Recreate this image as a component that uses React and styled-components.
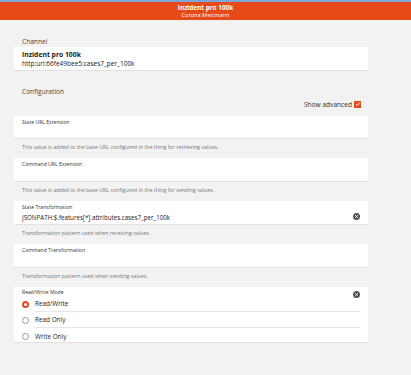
import React from 'react';
import styled, { createGlobalStyle } from 'styled-components';

const Global = createGlobalStyle`
    body {
        margin: 0;
        background: #f2f2f2;
        font-family: "Open Sans", "Noto Sans", Arial, sans-serif;
        color: #222;
    }
`

const TopLine = styled.div`
    height: 2px;
    background: #7aa7dc;
`
const Header = styled.div`
    height: 18px;
    background: #e64a19;
    color: #fff;
    display: flex;
    flex-direction: column;
    align-items: center;
    justify-content: center;
`
const Title = styled.div`
    font-size: 6.4px;
    font-weight: 700;
    line-height: 8px;
`
const Subtitle = styled.div`
    font-size: 5.6px;
    line-height: 7px;
`
const Page = styled.div`
    width: 354px;
    margin-left: 14px;
    padding-top: 16px;
`
const BlockTitle = styled.div`
    font-size: 6.6px;
    color: #444;
    padding-left: 8px;
    height: ${props => props.h || 11}px;
    line-height: 11px;
`
const Card = styled.div`
    background: #fff;
    border-bottom: 1px solid #e2e2e2;
    height: ${props => props.h}px;
    padding: ${props => props.pt || 3}px 8px 0 8px;
    box-sizing: border-box;
    position: relative;
`
const Strong = styled.div`
    font-size: 6.8px;
    font-weight: 700;
    line-height: 9px;
`
const Value = styled.div`
    font-size: ${props => props.size || 6.5}px;
    line-height: 9px;
    color: #222;
`
const Label = styled.div`
    font-size: 5.1px;
    line-height: 7px;
    color: #333;
`
const Hint = styled.div`
    font-size: 5.3px;
    color: #777;
    padding-left: 8px;
    height: 19px;
    line-height: 16px;
`
const AdvancedRow = styled.div`
    display: flex;
    justify-content: flex-end;
    align-items: center;
    gap: 2px;
    padding-right: 7px;
    height: 14px;
    margin: 2px 0 5px;
    font-size: 6.6px;
    color: #333;
`
const Check = styled.span`
    width: 7px;
    height: 7px;
    background: #e64a19;
    display: inline-flex;
    align-items: center;
    justify-content: center;
`
const Clear = styled.span`
    position: absolute;
    right: 8px;
    top: ${props => props.top}px;
    width: 7px;
    height: 7px;
    border-radius: 50%;
    background: #555;
    display: flex;
    align-items: center;
    justify-content: center;
`
const RadioRow = styled.div`
    display: flex;
    align-items: center;
    height: 16px;
`
const Dot = styled.span`
    width: ${props => props.on ? 3 : 5}px;
    height: ${props => props.on ? 3 : 5}px;
    border-radius: 50%;
    border: ${props => props.on ? '2px solid #e64a19' : '1px solid #999'};
    background: #fff;
    margin: 0 6px 0 0;
    flex: none;
`
const RadioText = styled.div`
    flex: 1;
    height: 100%;
    display: flex;
    align-items: center;
    font-size: 6.4px;
    color: #222;
    border-bottom: ${props => props.last ? 'none' : '1px solid #e6e6e6'};
    box-sizing: border-box;
`

const X = () => (
    <svg width="5" height="5" viewBox="0 0 5 5">
        <path d="M1.2 1.2 L3.8 3.8 M3.8 1.2 L1.2 3.8" stroke="#fff" strokeWidth="0.9" />
    </svg>
)

const App = () => {
    return (
        <>
            <Global />
            <TopLine />
            <Header>
                <Title>Inzident pro 100k</Title>
                <Subtitle>Corona Mettmann</Subtitle>
            </Header>
            <Page>
                <BlockTitle h={11}>Channel</BlockTitle>
                <Card h={24} pt={3}>
                    <Strong>Inzident pro 100k</Strong>
                    <Value>http:url:66fe49bee5:cases7_per_100k</Value>
                </Card>
                <BlockTitle h={9} style={{ marginTop: 15 }}>Configuration</BlockTitle>
                <AdvancedRow>
                    Show advanced
                    <Check>
                        <svg width="6" height="6" viewBox="0 0 6 6">
                            <path d="M1 3.2 L2.4 4.5 L5 1.5" stroke="#fff" strokeWidth="1" fill="none" />
                        </svg>
                    </Check>
                </AdvancedRow>
                <Card h={23}>
                    <Label>State URL Extension</Label>
                </Card>
                <Hint>This value is added to the base URL configured in the thing for retrieving values.</Hint>
                <Card h={24}>
                    <Label>Command URL Extension</Label>
                </Card>
                <Hint>This value is added to the base URL configured in the thing for sending values.</Hint>
                <Card h={24}>
                    <Label>State Transformation</Label>
                    <Value size={6.2} style={{ marginTop: 2 }}>JSONPATH:$.features[*].attributes.cases7_per_100k</Value>
                    <Clear top={12}><X /></Clear>
                </Card>
                <Hint>Transformation pattern used when receiving values.</Hint>
                <Card h={24}>
                    <Label>Command Transformation</Label>
                </Card>
                <Hint>Transformation pattern used when sending values.</Hint>
                <Card h={56} pt={2}>
                    <Label>Read/Write Mode</Label>
                    <Clear top={4}><X /></Clear>
                    <RadioRow>
                        <Dot on />
                        <RadioText>Read/Write</RadioText>
                    </RadioRow>
                    <RadioRow>
                        <Dot />
                        <RadioText>Read Only</RadioText>
                    </RadioRow>
                    <RadioRow>
                        <Dot />
                        <RadioText last>Write Only</RadioText>
                    </RadioRow>
                </Card>
            </Page>
        </>
    )
}

export default App;
